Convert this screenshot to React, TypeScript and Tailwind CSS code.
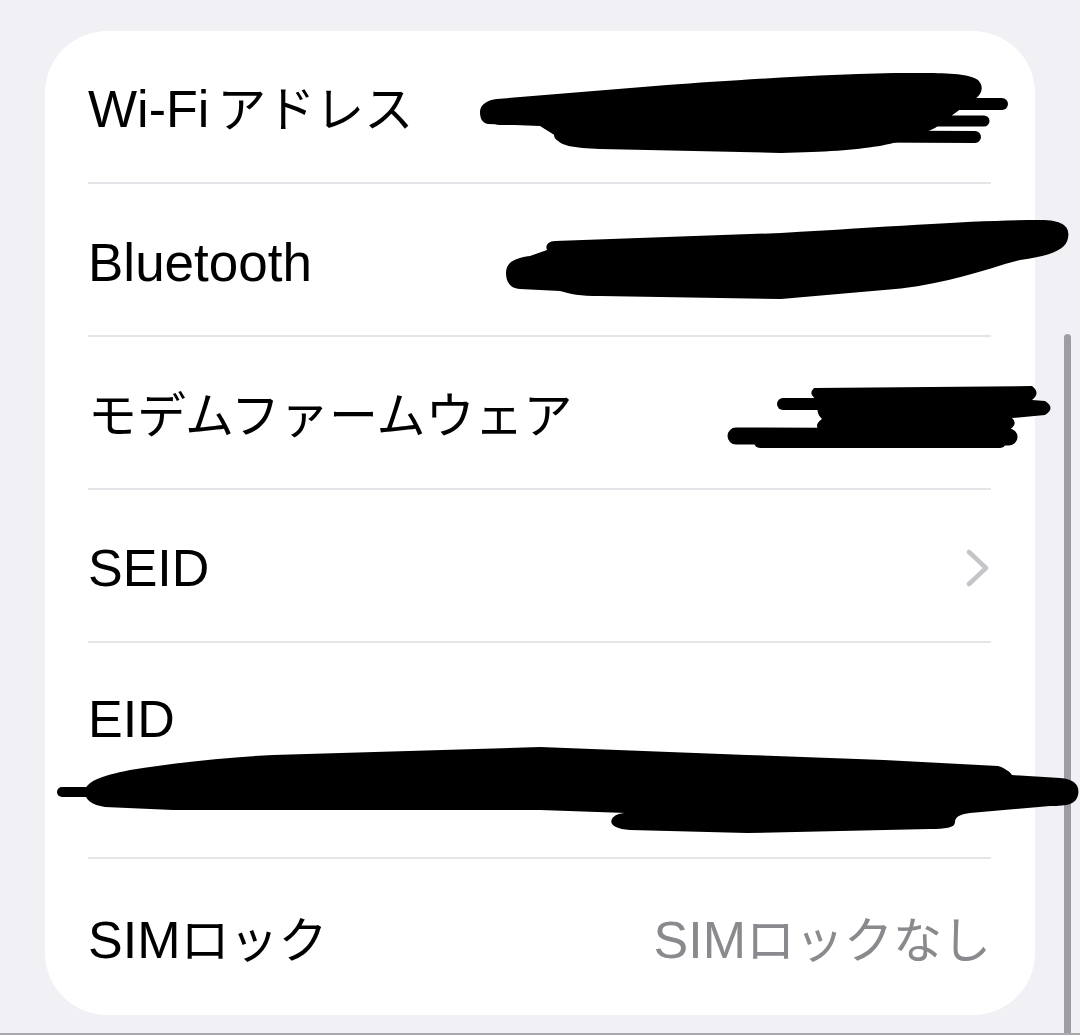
import React from 'react';

const Jp = ({ children, gap = '' }: { children: React.ReactNode; gap?: string }) => (
  <span className={`text-[49px] ${gap}`}>{children}</span>
);

const Divider = () => <div className="h-[2px] bg-[#e4e4e9]" />;

const Chevron = () => (
  <svg width="24" height="40" viewBox="0 0 24 40" className="mr-[1px]">
    <polyline
      points="3,4 20,20 3,36"
      fill="none"
      stroke="#c5c5c9"
      strokeWidth="4.5"
      strokeLinecap="round"
      strokeLinejoin="round"
    />
  </svg>
);

const Row = ({ label, value, h = 'h-[151px]' }: { label: React.ReactNode; value?: React.ReactNode; h?: string }) => (
  <div className={`flex items-center justify-between pt-[5px] ${h}`}>
    <div className="whitespace-nowrap text-black">{label}</div>
    <div className="whitespace-nowrap text-[#8a8a8e]">{value}</div>
  </div>
);

// redaction marker strokes, drawn over the page in page coordinates
const Scribbles = () => (
  <svg className="pointer-events-none absolute inset-0" width="1080" height="1035" viewBox="0 0 1080 1035">
    <g fill="#000" stroke="#000" strokeLinecap="round" strokeLinejoin="round">
      {/* Wi-Fi */}
      <path
        strokeWidth="0"
        d="M480 112 C480 104 488 100 497 99 L667 85 C740 80 850 72 924 73 C950 73 970 74 978 80 C986 88 980 98 970 102 L935 128 C900 145 870 151 781 153 L600 149 C575 148 556 146 556 136 L540 126 L488 124 C482 123 480 118 480 112 Z"
      />
      <line x1="500" y1="112" x2="940" y2="110" strokeWidth="26" />
      <line x1="940" y1="104" x2="1002" y2="104" strokeWidth="12" />
      <line x1="920" y1="121" x2="984" y2="121" strokeWidth="11" />
      <line x1="560" y1="135" x2="975" y2="137" strokeWidth="12" />
      <line x1="595" y1="143" x2="700" y2="145" strokeWidth="10" />
      {/* Bluetooth */}
      <path
        strokeWidth="0"
        d="M506 273 C506 262 515 258 530 256 L547 250 C545 246 548 241 555 241 L781 233 C900 226 980 220 1040 220 C1065 220 1070 228 1068 238 C1066 250 1050 256 1020 260 L1005 264 C970 275 930 287 884 290 L781 299 L600 296 C580 296 570 294 560 291 L520 289 C510 288 506 282 506 273 Z"
      />
      {/* modem firmware */}
      <path
        strokeWidth="0"
        d="M814 388 L1032 386 Q1041 393 1032 400 L1045 401 Q1056 408 1045 415 L1012 418 Q1019 424 1008 431 L820 432 Q813 425 822 419 Q813 410 822 402 Q806 396 814 388 Z"
      />
      <line x1="783" y1="404" x2="840" y2="404" strokeWidth="12" />
      <line x1="736" y1="436" x2="1009" y2="437" strokeWidth="17" />
      <line x1="760" y1="442" x2="1000" y2="442" strokeWidth="12" />
      {/* EID */}
      <line x1="62" y1="792" x2="100" y2="792" strokeWidth="10" />
      <path
        strokeWidth="0"
        d="M85 792 C85 782 100 776 130 770 C180 762 230 757 273 755 L540 747 L747 755 L884 760 L998 766 C1005 768 1010 772 1012 775 L1060 778 C1075 779 1080 786 1078 795 C1076 804 1068 806 1050 806 L970 813 C962 814 955 816 955 822 C955 828 945 829 930 829 L747 833 L630 830 C615 829 609 824 612 819 C614 815 620 813 626 813 L540 810 L173 810 L105 807 C92 805 85 800 85 792 Z"
      />
    </g>
  </svg>
);

export default function App() {
  return (
    <div className="relative h-[1035px] w-[1080px] overflow-hidden border-b-2 border-[#a9a9ae] bg-[#f0f0f5] font-['Liberation_Sans','Noto_Sans_CJK_JP',sans-serif] text-[52px] leading-none">
      <div className="ml-[45px] mt-[31px] h-[984px] w-[990px] rounded-[62px] bg-white pl-[43px] pr-[44px]">
        <Row label={<>Wi-Fi<Jp gap="ml-[8px]">アドレス</Jp></>} />
        <Divider />
        <Row label={<span className="text-[53px]">Bluetooth</span>} />
        <Divider />
        <Row label={<Jp>モデムファームウェア</Jp>} />
        <Divider />
        <Row label="SEID" value={<Chevron />} />
        <Divider />
        <div className="flex h-[214px] flex-col pt-[50px]">
          <div className="text-black">EID</div>
        </div>
        <Divider />
        <Row label={<>SIM<Jp>ロック</Jp></>} value={<>SIM<Jp>ロックなし</Jp></>} h="h-[156px]" />
      </div>
      <div className="absolute left-[1064px] top-[334px] h-[720px] w-[7px] rounded-full bg-[#9d9da2]" />
      <Scribbles />
    </div>
  );
}
